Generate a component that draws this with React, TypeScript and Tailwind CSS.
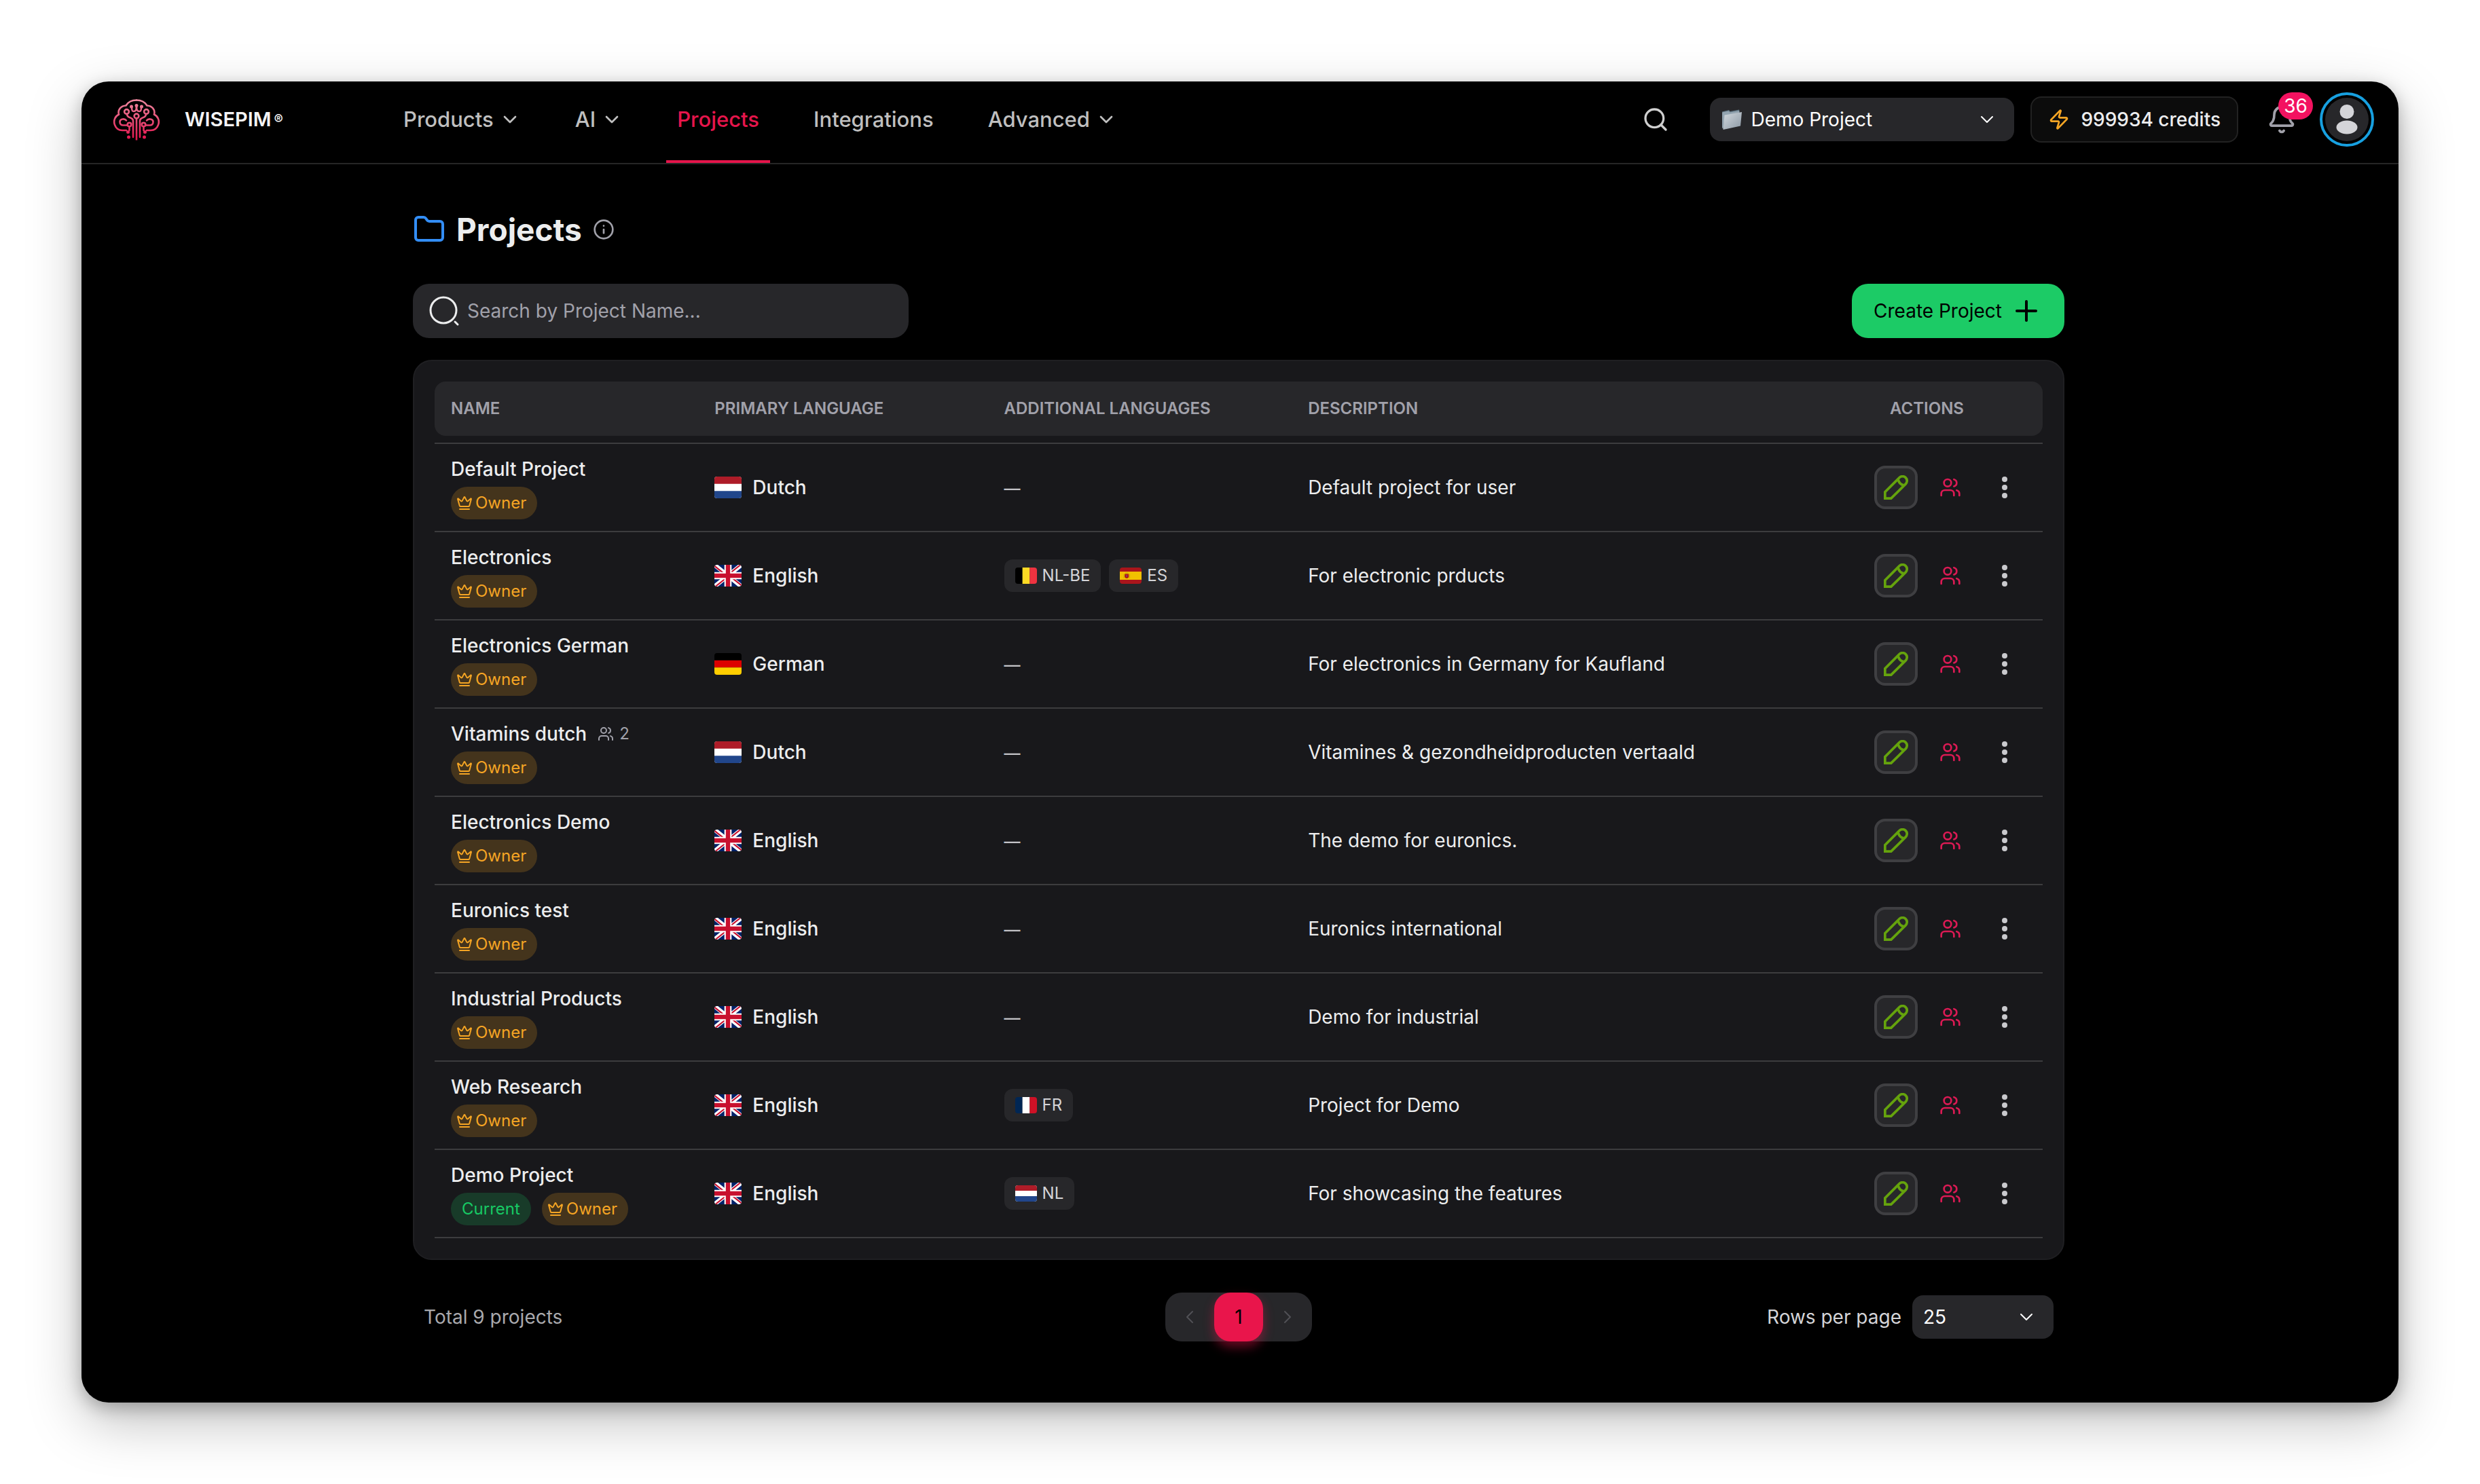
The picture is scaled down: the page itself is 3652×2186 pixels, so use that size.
import React, { FC, ReactNode, useState } from "react";
import {
  Bell,
  ChevronDown,
  ChevronLeft,
  ChevronRight,
  Crown,
  Folder,
  Info,
  Plus,
  Search,
  Users,
  Zap,
} from "lucide-react";

type FlagCode = "NL" | "GB" | "DE" | "BE" | "ES" | "FR";

interface Language {
  flag: FlagCode;
  label: string;
}

interface Project {
  name: string;
  language: Language;
  additional?: Language[];
  description: string;
  members?: number;
  current?: boolean;
}

const dutch: Language = { flag: "NL", label: "Dutch" };
const english: Language = { flag: "GB", label: "English" };
const german: Language = { flag: "DE", label: "German" };

const projects: Project[] = [
  { name: "Default Project", language: dutch, description: "Default project for user" },
  {
    name: "Electronics",
    language: english,
    additional: [
      { flag: "BE", label: "NL-BE" },
      { flag: "ES", label: "ES" },
    ],
    description: "For electronic prducts",
  },
  {
    name: "Electronics German",
    language: german,
    description: "For electronics in Germany for Kaufland",
  },
  {
    name: "Vitamins dutch",
    language: dutch,
    description: "Vitamines & gezondheidproducten vertaald",
    members: 2,
  },
  { name: "Electronics Demo", language: english, description: "The demo for euronics." },
  { name: "Euronics test", language: english, description: "Euronics international" },
  { name: "Industrial Products", language: english, description: "Demo for industrial" },
  {
    name: "Web Research",
    language: english,
    additional: [{ flag: "FR", label: "FR" }],
    description: "Project for Demo",
  },
  {
    name: "Demo Project",
    language: english,
    additional: [{ flag: "NL", label: "NL" }],
    description: "For showcasing the features",
    current: true,
  },
];

const navItems = [
  { label: "Products", menu: true },
  { label: "AI", menu: true },
  { label: "Projects", active: true },
  { label: "Integrations" },
  { label: "Advanced", menu: true },
];

const flags: Record<FlagCode, ReactNode> = {
  NL: (
    <>
      <path fill="#fff" d="M0 0h40v32H0z" />
      <path fill="#ae1c28" d="M0 0h40v10.7H0z" />
      <path fill="#21468b" d="M0 21.3h40V32H0z" />
    </>
  ),
  DE: (
    <>
      <path fill="#000" d="M0 0h40v10.7H0z" />
      <path fill="#dd0000" d="M0 10.7h40v10.6H0z" />
      <path fill="#ffce00" d="M0 21.3h40V32H0z" />
    </>
  ),
  BE: (
    <>
      <path fill="#000" d="M0 0h13.3v32H0z" />
      <path fill="#fdda24" d="M13.3 0h13.4v32H13.3z" />
      <path fill="#ef3340" d="M26.7 0H40v32H26.7z" />
    </>
  ),
  FR: (
    <>
      <path fill="#002654" d="M0 0h13.3v32H0z" />
      <path fill="#fff" d="M13.3 0h13.4v32H13.3z" />
      <path fill="#ce1126" d="M26.7 0H40v32H26.7z" />
    </>
  ),
  ES: (
    <>
      <path fill="#aa151b" d="M0 0h40v32H0z" />
      <path fill="#f1bf00" d="M0 8h40v16H0z" />
      <path fill="#ad1519" d="M9 12.5h7.5v5c0 2-1.5 3.5-3.7 3.5S9 19.5 9 17.5z" />
      <path fill="#c8b100" d="M10 10h5.5v2H10zM6.8 13h1.4v8H6.8zM17.4 13h1.4v8h-1.4z" />
      <path fill="#7a4a88" d="M11.5 15h2.5v3h-2.5z" />
    </>
  ),
  GB: (
    <>
      <path fill="#012169" d="M0 0h40v32H0z" />
      <path stroke="#fff" strokeWidth="6.4" d="M0 0l40 32M40 0L0 32" />
      <path stroke="#c8102e" strokeWidth="2.2" d="M0 1.5L16 14.3M40 30.5L24 17.7M38.5 0L24 11.5M1.5 32L16 20.5" />
      <path stroke="#fff" strokeWidth="10.6" d="M20 0v32M0 16h40" />
      <path stroke="#c8102e" strokeWidth="6.4" d="M20 0v32M0 16h40" />
    </>
  ),
};

const Flag: FC<{ code: FlagCode; className: string }> = ({ code, className }) => (
  <svg viewBox="0 0 40 32" preserveAspectRatio="none" className={`shrink-0 rounded ${className}`}>
    {flags[code]}
  </svg>
);

const LogoHalf: FC = () => (
  <>
    <path d="M35 1.5C27.5 1.5 22.5 4.5 19.5 9.5C12 10 7 15.5 9 22.5C3 25.5 .8 32 3 38C5 43.5 9 46 14 46H20" />
    <path d="M21 22c0 3 1 4 4 5s5 2 5 5v24" />
    <path d="M20 31.5c-2-3-9-3-9.5 1.5c-.3 4 2 5.5 5 5.5h5.5" />
    <path d="M24.5 41v5" />
    <path d="M28 12.5c0 4 .5 5.5 3 5.5s4-2.5 4-6" />
    <circle cx="20.5" cy="18.5" r="3.4" />
    <circle cx="24.5" cy="37.5" r="2.8" />
    <circle cx="27.5" cy="11" r="1.2" />
    <circle cx="22.5" cy="48.5" r="1.2" />
    <circle cx="23.5" cy="56" r="1.2" />
  </>
);

const BrainLogo: FC = () => (
  <svg viewBox="0 0 70 61" fill="none" stroke="url(#brain)" strokeWidth="2.6" strokeLinecap="round" className="h-[61px] w-[70px]">
    <defs>
      <linearGradient id="brain" gradientUnits="userSpaceOnUse" x1="35" y1="0" x2="35" y2="60">
        <stop offset="0" stopColor="#ee8aa0" />
        <stop offset=".45" stopColor="#e8557c" />
        <stop offset="1" stopColor="#e4134d" />
      </linearGradient>
    </defs>
    <LogoHalf />
    <g transform="matrix(-1 0 0 1 70 0)">
      <LogoHalf />
    </g>
    <circle cx="35" cy="9.5" r="1.2" />
    <circle cx="35" cy="25" r="3.4" />
    <rect x="33.7" y="28.500" width="2.6" height="32" fill="url(#brain)" stroke="none" />
  </svg>
);

const FolderPicture: FC = () => (
  <svg viewBox="0 0 32 32" className="h-8 w-8 shrink-0">
    <defs>
      <linearGradient id="folderFront" x1="0" y1="0" x2="1" y2="1">
        <stop offset="0" stopColor="#d3d9de" />
        <stop offset="1" stopColor="#8b98a4" />
      </linearGradient>
    </defs>
    <path fill="#5f7482" d="M2 4.5L12 2l1.5 2L27 1.5l1 4L8 12 3 30z" />
    <path fill="#93a4b0" d="M2 5.5l10-2 1.5 2L27 3v3L6 11 3.5 30 2 28z" />
    <path fill="url(#folderFront)" d="M5.5 9.5L31 5l-2 20.5L3.5 31z" />
  </svg>
);

const PencilIcon: FC = () => (
  <svg viewBox="0 0 35 35" fill="none" stroke="currentColor" strokeWidth="3.6" className="h-9 w-9 shrink-0">
    <path d="M1.8 33.2V24L22.4 3.4a6.4 6.4 0 0 1 9 9.1L10.5 33.2z" />
    <path d="M20.5 6c1 4.5 4 7.500 8.200 8.500" />
  </svg>
);

const OwnerBadge: FC = () => (
  <span className="flex h-12 items-center gap-1 rounded-full bg-[#f5a524]/20 pr-4 pl-2 text-2xl text-[#f5a524]">
    <Crown className="h-6 w-6" />
    Owner
  </span>
);

const Header: FC = () => (
  <header className="flex h-[122px] items-center border-b-2 border-[#262626] pr-9 pl-[46px]">
    <a href="#" className="flex w-[412px] shrink-0 items-center gap-9 pb-2">
      <BrainLogo />
      <span className="flex items-center gap-1 text-[29px] font-semibold text-zinc-100">
        WISEPIM
        <span className="text-xl">®</span>
      </span>
    </a>

    <nav className="flex h-full gap-12">
      {navItems.map((item) => (
        <a
          key={item.label}
          href="#"
          className={
            item.active
              ? "flex items-center border-b-4 border-[#e5154b] px-4 pt-1 pb-2 text-[31px] font-medium text-[#e5154b]"
              : "flex items-center gap-2 px-4 pt-1 pb-3 text-[31px] font-medium text-[#bfbfbf]"
          }
        >
          {item.label}
          {item.menu && <ChevronDown className="h-8 w-8" />}
        </a>
      ))}
    </nav>

    <div className="ml-auto flex items-center pb-2">
      <button aria-label="Search" className="mr-12 flex h-16 w-16 items-center justify-center text-[#cfcfcf]">
        <Search className="h-10 w-10" />
      </button>

      <label className="mr-6 flex h-16 w-[448px] items-center rounded-2xl bg-zinc-800 pr-6 pl-4 text-white">
        <FolderPicture />
        <select aria-label="Current project" className="ml-3 flex-1 appearance-none text-[28px] outline-none">
          <option>Demo Project</option>
        </select>
        <ChevronDown className="pointer-events-none h-8 w-8" strokeWidth={1.5} />
      </label>

      <a
        href="#"
        className="flex h-[68px] items-center gap-4 rounded-2xl border-2 border-[#222] bg-[#0c0c0c] px-6 text-[28px] font-medium text-[#ecedee]"
      >
        <Zap className="h-8 w-8 text-[#f5a524]" />
        999934 credits
      </a>

      <button aria-label="Notifications" className="relative mr-6 ml-8 flex h-16 w-16 items-center justify-center text-[#a1a1aa]">
        <Bell className="h-11 w-11" />
        <span className="absolute -top-2 -right-3.5 flex h-10 items-center rounded-full bg-[#f31260] px-2 text-[28px] text-white">
          36
        </span>
      </button>

      <button aria-label="Account" className="h-20 w-20 rounded-full border-4 border-[#17a0e0] p-1">
        <svg viewBox="0 0 64 64" className="h-16 w-16">
          <circle cx="32" cy="32" r="32" fill="#27272a" />
          <circle cx="32" cy="20.5" r="10.5" fill="#d4d4d8" />
          <ellipse cx="32" cy="43.5" rx="15.5" ry="10" fill="#d4d4d8" />
        </svg>
      </button>
    </div>
  </header>
);

const ProjectRow: FC<{ project: Project; first: boolean }> = ({ project, first }) => {
  const cell = first
    ? "h-[132px] border-y-2 border-[#3c3c3e] px-6"
    : "h-[130px] border-b-2 border-[#3c3c3e] px-6";

  return (
    <tr>
      <td className={cell}>
        <div className="flex flex-col gap-1.5">
          <div className="flex items-center gap-4 leading-10 font-medium">
            {project.name}
            {project.members && (
              <span className="flex items-center gap-2 text-2xl font-normal text-[#a1a1aa]">
                <Users className="h-6 w-6" />
                {project.members}
              </span>
            )}
          </div>
          <div className="flex gap-4">
            {project.current && (
              <span className="flex h-12 items-center rounded-full bg-[#17c964]/20 px-4 text-2xl text-[#17c964]">
                Current
              </span>
            )}
            <OwnerBadge />
          </div>
        </div>
      </td>
      <td className={cell}>
        <div className="flex items-center gap-4 font-medium">
          <Flag code={project.language.flag} className="h-8 w-10" />
          {project.language.label}
        </div>
      </td>
      <td className={cell}>
        {project.additional ? (
          <div className="flex gap-3">
            {project.additional.map((lang) => (
              <span key={lang.label} className="flex h-12 items-center gap-2 rounded-xl bg-zinc-800 px-4 text-2xl text-[#d4d4d8]">
                <Flag code={lang.flag} className="h-6 w-8" />
                {lang.label}
              </span>
            ))}
          </div>
        ) : (
          <span className="text-2xl font-medium text-[#c4c4c8]">—</span>
        )}
      </td>
      <td className={cell}>{project.description}</td>
      <td className={cell}>
        <div className="flex justify-end gap-4">
          <button
            aria-label={`Edit ${project.name}`}
            className="flex h-16 w-16 items-center justify-center rounded-2xl border-4 border-[#3f3f42] bg-zinc-800 text-[#65a30d]"
          >
            <PencilIcon />
          </button>
          <button
            aria-label={`Members of ${project.name}`}
            className="flex h-16 w-16 items-center justify-center text-[#db1a54]"
          >
            <Users className="h-8 w-8" />
          </button>
          <button
            aria-label={`More actions for ${project.name}`}
            className="flex h-16 w-16 flex-col items-center justify-center gap-1"
          >
            <span className="h-2 w-2 rounded-full bg-[#c9c9cd]" />
            <span className="h-2 w-2 rounded-full bg-[#c9c9cd]" />
            <span className="h-2 w-2 rounded-full bg-[#c9c9cd]" />
          </button>
        </div>
      </td>
    </tr>
  );
};

const ProjectsTable: FC<{ rows: Project[] }> = ({ rows }) => (
  <div className="mt-8 rounded-[28px] border-2 border-[#1f1f22] bg-[#18181b] p-[30px]">
    <table className="w-full table-fixed border-separate border-spacing-0 text-[28px] text-[#ecedee]">
      <thead>
        <tr className="h-20 text-left text-2xl text-[#a1a1aa]">
          <th className="w-[16.4%] rounded-l-2xl bg-zinc-800 px-6 font-semibold">NAME</th>
          <th className="w-[18%] bg-zinc-800 px-6 font-semibold">PRIMARY LANGUAGE</th>
          <th className="w-[18.9%] bg-zinc-800 px-6 font-semibold">ADDITIONAL LANGUAGES</th>
          <th className="bg-zinc-800 px-6 font-semibold">DESCRIPTION</th>
          <th className="w-[14.4%] rounded-r-2xl bg-zinc-800 px-6 text-center font-semibold">ACTIONS</th>
        </tr>
        <tr aria-hidden="true">
          <td className="h-2.5 p-0" colSpan={5} />
        </tr>
      </thead>
      <tbody>
        {rows.map((project, i) => (
          <ProjectRow key={project.name} project={project} first={i === 0} />
        ))}
      </tbody>
    </table>
  </div>
);

const Footer: FC = () => (
  <div className="mt-12 grid grid-cols-3 items-center px-4 text-[28px]">
    <p className="text-[#a9a9ad]">Total 9 projects</p>

    <div className="flex justify-self-center rounded-3xl bg-zinc-800">
      <button aria-label="Previous page" disabled className="flex h-18 w-18 items-center justify-center text-[#515155]">
        <ChevronLeft className="h-8 w-8" strokeWidth={1.5} />
      </button>
      <button className="h-18 w-18 rounded-3xl bg-[#e9154b] text-black shadow-[0_8px_16px_rgba(233,21,75,0.45)]">1</button>
      <button aria-label="Next page" disabled className="flex h-18 w-18 items-center justify-center text-[#515155]">
        <ChevronRight className="h-8 w-8" strokeWidth={1.5} />
      </button>
    </div>

    <div className="flex items-center gap-4 justify-self-end">
      <label htmlFor="rows" className="text-[#d4d4d8]">
        Rows per page
      </label>
      <div className="flex h-16 w-52 items-center rounded-2xl bg-zinc-800 pr-6 pl-4 text-white">
        <select id="rows" defaultValue="25" className="flex-1 appearance-none outline-none">
          <option>10</option>
          <option>25</option>
          <option>50</option>
        </select>
        <ChevronDown className="pointer-events-none h-8 w-8" strokeWidth={1.5} />
      </div>
    </div>
  </div>
);

const App: FC = () => {
  const [query, setQuery] = useState("");
  const rows = projects.filter((p) => p.name.toLowerCase().includes(query.toLowerCase()));

  return (
    <div className="flex min-h-screen bg-white p-[120px] font-['Inter',sans-serif]">
      <div className="flex-1 overflow-hidden rounded-[40px] bg-black shadow-[0_8px_24px_rgba(0,0,0,0.25),0_28px_80px_rgba(0,0,0,0.25)]">
        <Header />

        <main className="mx-auto max-w-[2436px] pt-16 pr-1 pb-20">
          <h1 className="flex items-center gap-4 text-[46px] leading-16 font-bold text-[#ecedee]">
            <Folder className="h-12 w-12 text-[#338ef7]" />
            Projects
            <Info className="h-8 w-8 text-[#a1a1aa]" />
          </h1>

          <div className="mt-12 flex items-center justify-between">
            <label className="flex h-20 w-[30%] items-center gap-2.5 rounded-3xl bg-zinc-800 px-[22px] text-[#ecedee]">
              <svg
                viewBox="0 0 24 24"
                fill="none"
                stroke="currentColor"
                strokeWidth="1.5"
                strokeLinecap="round"
                className="h-12 w-12 shrink-0"
              >
                <circle cx="11.5" cy="11.5" r="9.5" />
                <path d="M22 22l-2-2" />
              </svg>
              <input
                aria-label="Search projects"
                value={query}
                onChange={(e) => setQuery(e.target.value)}
                placeholder="Search by Project Name..."
                className="min-w-0 flex-1 text-[28px] outline-none placeholder:text-[#a1a1aa]"
              />
            </label>
            <button className="flex h-20 items-center gap-3 rounded-3xl bg-[#1ccb66] px-8 text-[28px] text-black">
              Create Project
              <Plus className="h-12 w-12" />
            </button>
          </div>

          <ProjectsTable rows={rows} />
          <Footer />
        </main>
      </div>
    </div>
  );
};

export default App;
